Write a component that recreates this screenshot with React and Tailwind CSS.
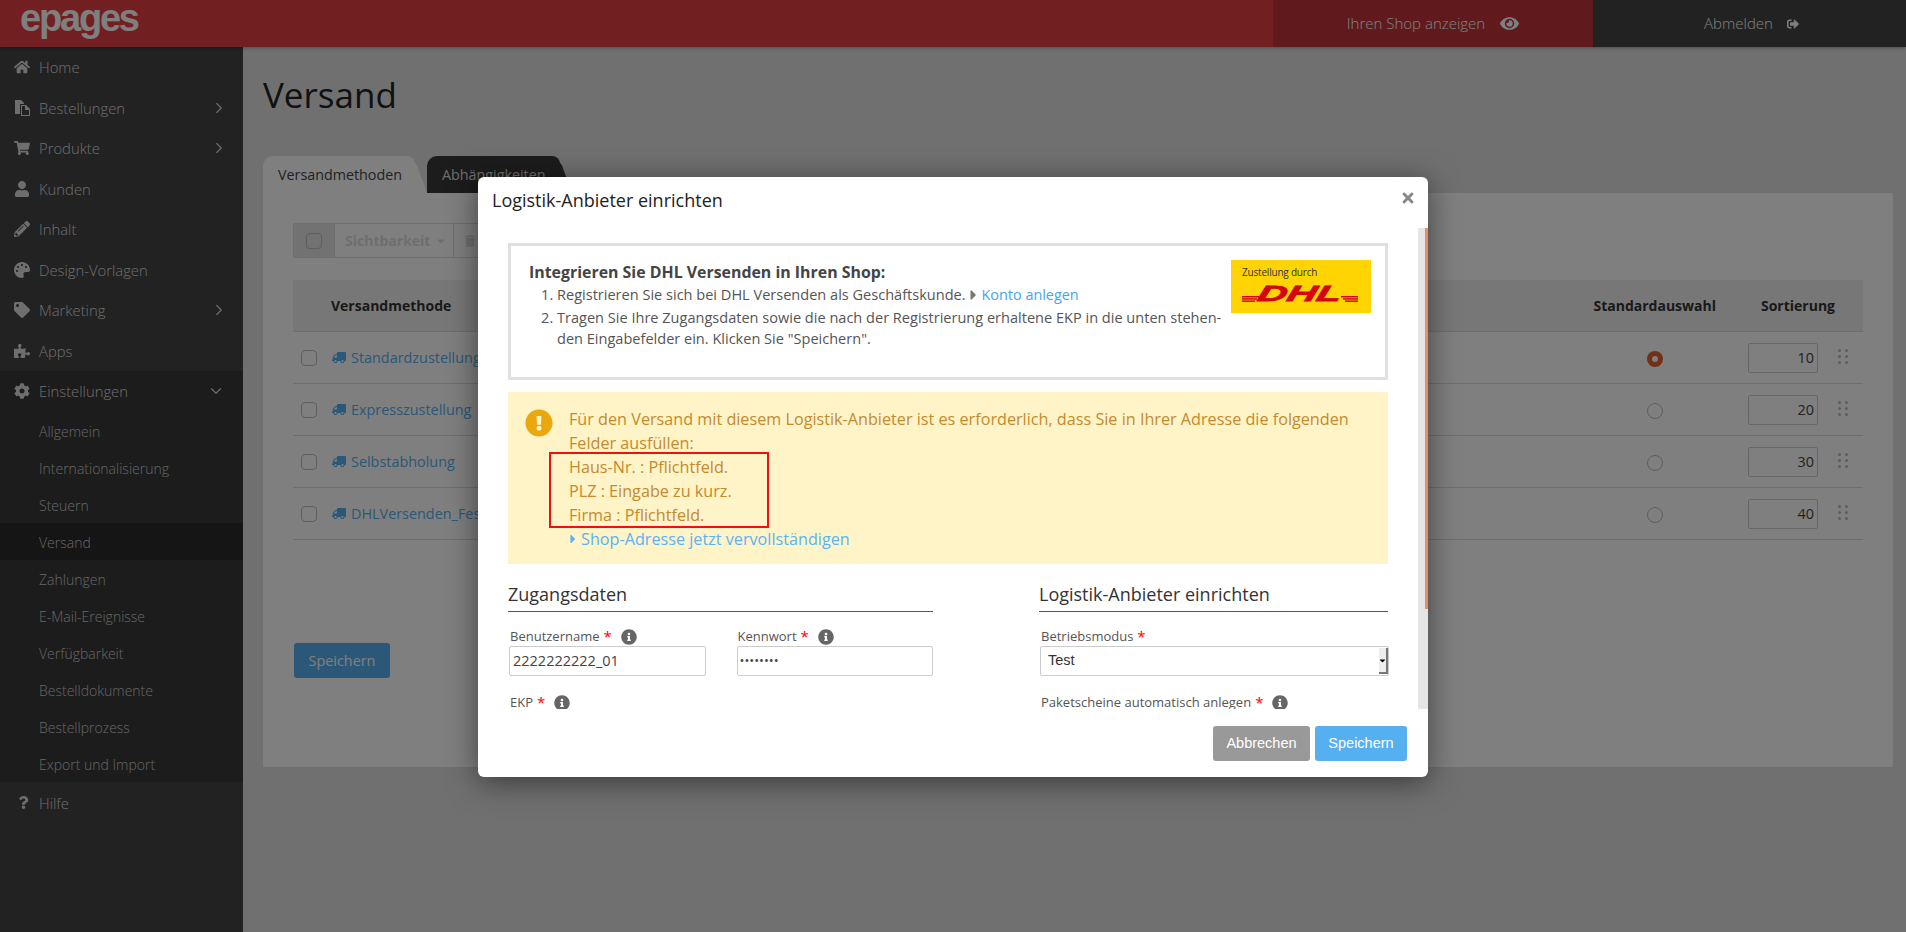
import React from 'react';
import { ChevronRight, ChevronDown } from 'lucide-react';
import {
    FaHome, FaShoppingCart, FaUser, FaPencilAlt, FaPalette, FaTag, FaPuzzlePiece, FaCog, FaQuestion,
    FaTruck, FaEye, FaSignOutAlt, FaTrash, FaInfoCircle, FaExclamationCircle, FaTimes, FaCaretRight, FaCaretDown,
} from 'react-icons/fa';

// files-o look: solid back page, outlined front page
const FilesIcon = ({ className }) => (
    <svg viewBox="0 0 16 16" className={className} fill="currentColor">
        <path d="M1 0h6l3 3v1H6v10H1z" />
        <path fillRule="evenodd" d="M7 5h5l4 4v7H7zM8 6v9h7V10h-4V6z" />
    </svg>
);

const menuTop = [
    { label: 'Home', icon: FaHome },
    { label: 'Bestellungen', icon: FilesIcon, arrow: true },
    { label: 'Produkte', icon: FaShoppingCart, arrow: true },
    { label: 'Kunden', icon: FaUser },
    { label: 'Inhalt', icon: FaPencilAlt },
    { label: 'Design-Vorlagen', icon: FaPalette },
    { label: 'Marketing', icon: FaTag, arrow: true },
    { label: 'Apps', icon: FaPuzzlePiece },
];

const subMenu = [
    'Allgemein', 'Internationalisierung', 'Steuern', 'Versand', 'Zahlungen', 'E-Mail-Ereignisse',
    'Verfügbarkeit', 'Bestelldokumente', 'Bestellprozess', 'Export und Import',
];

const methods = [
    { name: 'Standardzustellung', sort: 10, active: true },
    { name: 'Expresszustellung', sort: 20 },
    { name: 'Selbstabholung', sort: 30 },
    { name: 'DHLVersenden_Fest', sort: 40 },
];

const Header = () => (
    <div className="relative z-10 flex h-[47px] bg-[#e23e42] font-['Open_Sans',sans-serif] text-[15px] text-white shadow-[0_1px_4px_rgba(0,0,0,0.3)]">
        <div className="flex-1 pl-[20px] font-['Liberation_Sans',sans-serif] text-[38px] font-bold leading-[36px] tracking-[-2.2px]">epages</div>
        <div className="flex w-[320px] items-center justify-center gap-[15px] bg-[#c0343a] font-light">
            Ihren Shop anzeigen
            <FaEye className="h-[19px] w-[19px]" />
        </div>
        <div className="flex w-[313px] items-center justify-center gap-[14px] bg-[#444444] pl-[4px] font-light">
            Abmelden
            <FaSignOutAlt className="h-[12px] w-[12px]" />
        </div>
    </div>
);

const MenuItem = ({ item }) => (
    <div className="flex h-[40.5px] items-center text-[#dddddd]">
        <item.icon className="ml-[14px] h-[16px] w-[16px]" />
        <span className="ml-[9px] flex-1">{item.label}</span>
        {item.arrow && <ChevronRight className="mr-[15px] h-[18px] w-[18px]" strokeWidth={1.5} />}
    </div>
);

const Sidebar = () => (
    <div className="w-[243px] shrink-0 bg-[#444444] font-['Open_Sans',sans-serif] text-[14.8px] font-light">
        {menuTop.map((item) => <MenuItem key={item.label} item={item} />)}
        <div className="bg-[#383838]">
            <div className="flex h-[40.5px] items-center text-[#dddddd]">
                <FaCog className="ml-[14px] h-[16px] w-[16px]" />
                <span className="ml-[9px] flex-1">Einstellungen</span>
                <ChevronDown className="mr-[18px] h-[18px] w-[18px]" strokeWidth={1.5} />
            </div>
            {subMenu.map((label) => (
                <div
                    key={label}
                    className={`flex h-[37px] items-center pl-[39px] pt-[2px] text-[14px] text-[#cccccc] ${label === 'Versand' ? 'bg-[#2a2a2a]' : ''}`}
                >
                    {label}
                </div>
            ))}
        </div>
        <div className="flex h-[40.5px] items-center pt-[2px] text-[#dddddd]">
            <FaQuestion className="ml-[17px] h-[13px] w-[13px]" />
            <span className="ml-[9px]">Hilfe</span>
        </div>
    </div>
);

const Check = () => <span className="block h-[16px] w-[16px] rounded-[4px] border border-[#bbbbbb]" />;

const Grip = () => (
    <div className="grid w-[10px] grid-cols-2 gap-x-[4px] gap-y-[3px]">
        {[0, 1, 2, 3, 4, 5].map((i) => <span key={i} className="h-[3px] w-[3px] rounded-full bg-[#bbbbbb]" />)}
    </div>
);

const MethodRow = ({ method }) => (
    <div className="flex h-[52px] items-center border-b border-[#dddddd] text-[14.4px]">
        <div className="ml-[8px] mt-[1px] w-[31px]"><Check /></div>
        <FaTruck className="h-[13px] w-[14px] -scale-x-100 text-[#56b0f0]" />
        <span className="ml-[5px] flex-1 text-[#56b0f0]">{method.name}</span>
        <div className="mt-[2px] flex w-[16px] justify-center">
            {method.active ? (
                <span className="flex h-[16px] w-[16px] items-center justify-center rounded-full bg-[#e0622f]">
                    <span className="h-[6px] w-[6px] rounded-full bg-white" />
                </span>
            ) : (
                <span className="h-[16px] w-[16px] rounded-full border border-[#bbbbbb]" />
            )}
        </div>
        <div className="ml-[85px] flex h-[30px] w-[70px] items-center justify-end rounded-[2px] border border-[#cccccc] bg-white pr-[3px] text-[#444444]">
            {method.sort}
        </div>
        <div className="ml-[20px] mr-[15px] -mt-[2px]"><Grip /></div>
    </div>
);

const Tabs = () => (
    <div className="flex h-[37px] text-[14.3px]">
        <div className="relative flex w-[152px] items-center rounded-tl-[10px] rounded-tr-[8px] bg-white pl-[15px] text-[#444444]">
            Versandmethoden
            <span className="absolute right-[-6px] top-[4px] h-[33px] w-[12px] skew-x-[20deg] rounded-tr-[6px] bg-white" />
        </div>
        <div className="relative ml-[12px] flex w-[133px] items-center rounded-tl-[10px] rounded-tr-[8px] bg-[#383838] pl-[15px] text-[#dddddd]">
            Abhängigkeiten
            <span className="absolute right-[-6px] top-[4px] h-[33px] w-[12px] skew-x-[20deg] rounded-tr-[6px] bg-[#383838]" />
        </div>
    </div>
);

const Main = () => (
    <div className="flex-1 bg-[#e0e0e0] pl-[20px] pr-[13px] pt-[24px] font-['Open_Sans',sans-serif]">
        <h1 className="h-[85px] text-[35px] font-normal leading-[48px] text-[#222222]">Versand</h1>
        <Tabs />
        <div className="h-[574px] bg-white px-[30px] pt-[30px]">
            <div className="flex h-[35px] w-[400px] items-center rounded-[2px] border border-[#dddddd] text-[14px] font-bold text-[#dddddd]">
                <div className="flex h-full w-[41px] items-center justify-center border-r border-[#dddddd] bg-[#e4e4e4]"><Check /></div>
                <div className="flex h-full w-[119px] items-center gap-[5px] border-r border-[#dddddd] pl-[10px]">
                    Sichtbarkeit
                    <FaCaretDown className="h-[12px] w-[12px]" />
                </div>
                <FaTrash className="ml-[10px] h-[12px] w-[12px]" />
            </div>
            <div className="mt-[22px] flex h-[52px] items-center border-b border-[#dddddd] bg-[#eeeeee] text-[14px] font-bold text-[#333333]">
                <span className="ml-[38px] flex-1">Versandmethode</span>
                <span className="mr-[45px]">Standardauswahl</span>
                <span className="mr-[28px]">Sortierung</span>
            </div>
            {methods.map((m) => <MethodRow key={m.name} method={m} />)}
            <button className="mt-[103px] ml-[1px] flex h-[35px] w-[96px] items-center justify-center rounded-[3px] bg-[#56b0f0] text-[14.4px] text-white">
                Speichern
            </button>
        </div>
    </div>
);

const DhlStripes = ({ right }) => (
    <svg width="17" height="17" viewBox="0 0 17 17" className={`shrink-0 ${right ? '-scale-x-100' : ''}`}>
        <rect x="0" y="11" width="17" height="1.5" fill="#d40511" />
        <rect x="0" y="13.2" width="15" height="1.5" fill="#d40511" />
        <rect x="0" y="15.4" width="13" height="1.5" fill="#d40511" />
    </svg>
);

const DhlLogo = () => (
    <div className="h-[53px] w-[140px] shrink-0 bg-[#ffd400] pl-[11px] pr-[11px] pt-[7px]">
        <div className="font-['Open_Sans',sans-serif] text-[10px] leading-[11px] tracking-[-0.2px] text-[#333333]">Zustellung durch</div>
        <div className="mt-[7px] flex h-[17px] items-center">
            <DhlStripes />
            <span className="w-[82px] text-center font-['Liberation_Sans',sans-serif] text-[22px] font-bold italic leading-[17px] text-[#d40511] [-webkit-text-stroke:0.8px_#d40511] [transform:scaleX(1.85)_skewX(-8deg)]">DHL</span>
            <DhlStripes right />
        </div>
    </div>
);

const InfoBox = () => (
    <div className="flex h-[137px] border-[3px] border-[#e0e0e0] pl-[18px] pr-[14px] pt-[14px] text-[14.55px] leading-[21px] text-[#555555]">
        <div className="flex-1">
            <div className="text-[15.9px] font-bold leading-[24px] text-[#444444]">Integrieren Sie DHL Versenden in Ihren Shop:</div>
            <ol className="list-decimal pl-[28px]">
                <li className="mb-[2px]">
                    Registrieren Sie sich bei DHL Versenden als Geschäftskunde.
                    <FaCaretRight className="mb-[2px] ml-[2px] inline h-[16px] w-[11px] text-[#777777]" />
                    <span className="ml-[3px] text-[14.4px] text-[#43a6ef]">Konto anlegen</span>
                </li>
                <li>Tragen Sie Ihre Zugangsdaten sowie die nach der Registrierung erhaltene EKP in die unten stehen-<br />den Eingabefelder ein. Klicken Sie "Speichern".</li>
            </ol>
        </div>
        <div className="ml-[6px]"><DhlLogo /></div>
    </div>
);

const WarningBox = () => (
    <div className="relative mt-[12px] flex h-[172px] bg-[#fff3c8] pt-[15px] text-[16.2px] leading-[24px] text-[#c48a2c]">
        <FaExclamationCircle className="ml-[17px] mt-[2px] h-[28px] w-[28px] shrink-0 text-[#eaa80f]" />
        <div className="ml-[16px] pr-[30px]">
            <div>Für den Versand mit diesem Logistik-Anbieter ist es erforderlich, dass Sie in Ihrer Adresse die folgenden Felder ausfüllen:</div>
            <div>Haus-Nr. : Pflichtfeld.</div>
            <div>PLZ : Eingabe zu kurz.</div>
            <div>Firma : Pflichtfeld.</div>
            <div className="flex items-center text-[#5bb3f2]">
                <FaCaretRight className="h-[14px] w-[8px]" />
                <span className="ml-[4px]">Shop-Adresse jetzt vervollständigen</span>
            </div>
        </div>
        {/* red marker drawn over the screenshot */}
        <div className="absolute left-[41px] top-[60px] h-[76px] w-[220px] border-2 border-[#f01010]" />
    </div>
);

const Label = ({ text, info = true }) => (
    <div className="flex h-[20px] items-center pl-[2px] pt-[1px] text-[13px] text-[#555555]">
        {text}
        <span className="ml-[4px] text-[15px] text-[#ff0000]">*</span>
        {info && <FaInfoCircle className="ml-[9px] h-[16px] w-[16px] text-[#666666]" />}
    </div>
);

const Forms = () => (
    <div className="mt-[15px] flex justify-between">
        <div className="w-[425px]">
            <div className="h-[33px] border-b border-[#555555] text-[18px] leading-[30px] text-[#333333]">Zugangsdaten</div>
            <div className="mt-[14px] flex gap-[30px]">
                <div className="w-[198px]">
                    <Label text="Benutzername" />
                    <div className="ml-[1px] flex h-[30px] items-center rounded-[2px] border border-[#cccccc] pl-[3px] text-[14.5px] text-[#444444]">2222222222_01</div>
                </div>
                <div className="w-[198px]">
                    <Label text="Kennwort" />
                    <div className="ml-[1px] flex h-[30px] items-center rounded-[2px] border border-[#cccccc] pl-[2px] text-[13px] text-[#444444]">••••••••</div>
                </div>
            </div>
            <div className="mt-[16px]"><Label text="EKP" /></div>
        </div>
        <div className="w-[349px]">
            <div className="h-[33px] border-b border-[#555555] text-[18px] leading-[30px] text-[#333333]">Logistik-Anbieter einrichten</div>
            <div className="mt-[14px]">
                <Label text="Betriebsmodus" info={false} />
                <div className="ml-[1px] flex h-[30px] w-[349px] items-center justify-between rounded-[2px] border border-[#cccccc] pl-[7px] font-['Liberation_Sans',sans-serif] text-[14.5px] text-[#333333]">
                    Test
                    <span className="flex h-[26px] w-[9px] items-center justify-center border-b-2 border-r-2 border-[#777777] bg-[#eeeeee]">
                        <FaCaretDown className="h-[9px] w-[9px] text-black" />
                    </span>
                </div>
            </div>
            <div className="mt-[16px]"><Label text="Paketscheine automatisch anlegen" /></div>
        </div>
    </div>
);

const Modal = () => (
    <div className="flex h-[600px] w-[950px] flex-col rounded-[6px] bg-white font-['Open_Sans',sans-serif] shadow-[0_5px_30px_rgba(0,0,0,0.5)]">
        <div className="flex h-[51px] shrink-0 items-start justify-between pl-[14px] pr-[12px]">
            <span className="mt-[10px] text-[18px] leading-[27px] text-[#222222]">Logistik-Anbieter einrichten</span>
            <FaTimes className="mt-[13px] h-[16px] w-[16px] text-[#888888]" />
        </div>
        <div className="flex h-[481px] overflow-hidden">
            <div className="w-[940px] overflow-hidden pl-[30px] pr-[30px] pt-[15px]">
                <InfoBox />
                <WarningBox />
                <Forms />
            </div>
            <div className="flex w-[10px] justify-end bg-[#e5e5e5]">
                <div className="h-[381px] w-[3px] bg-[#ea8c66]" />
            </div>
        </div>
        <div className="flex flex-1 justify-end gap-[5px] pr-[21px] pt-[17px] font-['Liberation_Sans',sans-serif] text-[14.5px] text-white">
            <button className="h-[35px] w-[97px] rounded-[3px] bg-[#999999]">Abbrechen</button>
            <button className="h-[35px] w-[92px] rounded-[3px] bg-[#56b0f0]">Speichern</button>
        </div>
    </div>
);

const App = () => (
    <div className="relative h-[932px] overflow-hidden bg-[#e0e0e0]">
        <Header />
        <div className="flex h-[885px]">
            <Sidebar />
            <Main />
        </div>
        <div className="absolute inset-0 z-20 flex justify-center bg-black/50 pt-[177px]">
            <Modal />
        </div>
    </div>
);

export default App;
